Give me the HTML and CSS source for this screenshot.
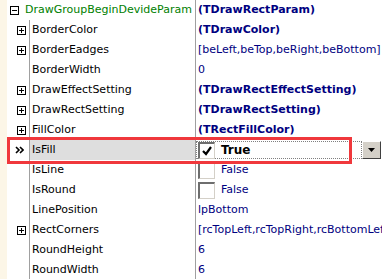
FILE: index.html
```html
<!DOCTYPE html>
<html lang="en">
<head>
    <meta charset="UTF-8">
    <title>Object Inspector</title>
    <link rel="stylesheet" href="styles.css">
</head>
<body>
    <div class="inspector">
        <div class="row group">
            <div class="gutter"></div>
            <div class="group-name">
                <svg class="box" width="9" height="9" viewBox="0 0 9 9"><rect x="0.5" y="0.5" width="8" height="8" fill="#fff" stroke="#000"/><path d="M2 4.5h5" stroke="#000"/></svg>
                <span class="green">DrawGroupBeginDevideParam</span>
            </div>
            <div class="value bold">(TDrawRectParam)</div>
        </div>
        <div class="row">
            <div class="gutter"></div>
            <div class="tree"><svg class="box" width="9" height="9" viewBox="0 0 9 9"><rect x="0.5" y="0.5" width="8" height="8" fill="#fff" stroke="#000"/><path d="M2 4.5h5M4.5 2v5" stroke="#000"/></svg></div>
            <div class="name">BorderColor</div>
            <div class="value bold">(TDrawColor)</div>
        </div>
        <div class="row">
            <div class="gutter"></div>
            <div class="tree"><svg class="box" width="9" height="9" viewBox="0 0 9 9"><rect x="0.5" y="0.5" width="8" height="8" fill="#fff" stroke="#000"/><path d="M2 4.5h5M4.5 2v5" stroke="#000"/></svg></div>
            <div class="name">BorderEadges</div>
            <div class="value">[beLeft,beTop,beRight,beBottom]</div>
        </div>
        <div class="row">
            <div class="gutter"></div>
            <div class="tree"></div>
            <div class="name">BorderWidth</div>
            <div class="value">0</div>
        </div>
        <div class="row">
            <div class="gutter"></div>
            <div class="tree"><svg class="box" width="9" height="9" viewBox="0 0 9 9"><rect x="0.5" y="0.5" width="8" height="8" fill="#fff" stroke="#000"/><path d="M2 4.5h5M4.5 2v5" stroke="#000"/></svg></div>
            <div class="name">DrawEffectSetting</div>
            <div class="value bold">(TDrawRectEffectSetting)</div>
        </div>
        <div class="row">
            <div class="gutter"></div>
            <div class="tree"><svg class="box" width="9" height="9" viewBox="0 0 9 9"><rect x="0.5" y="0.5" width="8" height="8" fill="#fff" stroke="#000"/><path d="M2 4.5h5M4.5 2v5" stroke="#000"/></svg></div>
            <div class="name">DrawRectSetting</div>
            <div class="value bold">(TDrawRectSetting)</div>
        </div>
        <div class="row">
            <div class="gutter"></div>
            <div class="tree"><svg class="box" width="9" height="9" viewBox="0 0 9 9"><rect x="0.5" y="0.5" width="8" height="8" fill="#fff" stroke="#000"/><path d="M2 4.5h5M4.5 2v5" stroke="#000"/></svg></div>
            <div class="name">FillColor</div>
            <div class="value bold">(TRectFillColor)</div>
        </div>
        <div class="row selected">
            <div class="gutter"></div>
            <div class="tree"><svg class="arrow" width="9" height="8" viewBox="0 0 9 8"><path d="M1 1l3 3-3 3M5 1l3 3-3 3" fill="none" stroke="#000" stroke-width="1.6"/></svg></div>
            <div class="name">IsFill</div>
            <div class="value editor">
                <div class="edit-box">
                    <span class="check on"><svg width="12" height="12" viewBox="0 0 12 12"><path d="M2 6l3 3 5-7" fill="none" stroke="#000" stroke-width="2.2"/></svg></span>
                    <span class="true">True</span>
                </div>
                <div class="drop"><svg width="7" height="4" viewBox="0 0 7 4"><path d="M0 0h7L3.5 4z" fill="#000"/></svg></div>
            </div>
        </div>
        <div class="row">
            <div class="gutter"></div>
            <div class="tree"></div>
            <div class="name">IsLine</div>
            <div class="value"><span class="check"></span>False</div>
        </div>
        <div class="row">
            <div class="gutter"></div>
            <div class="tree"></div>
            <div class="name">IsRound</div>
            <div class="value"><span class="check"></span>False</div>
        </div>
        <div class="row">
            <div class="gutter"></div>
            <div class="tree"></div>
            <div class="name">LinePosition</div>
            <div class="value">lpBottom</div>
        </div>
        <div class="row">
            <div class="gutter"></div>
            <div class="tree"><svg class="box" width="9" height="9" viewBox="0 0 9 9"><rect x="0.5" y="0.5" width="8" height="8" fill="#fff" stroke="#000"/><path d="M2 4.5h5M4.5 2v5" stroke="#000"/></svg></div>
            <div class="name">RectCorners</div>
            <div class="value">[rcTopLeft,rcTopRight,rcBottomLeft,rcBottomRight]</div>
        </div>
        <div class="row">
            <div class="gutter"></div>
            <div class="tree"></div>
            <div class="name">RoundHeight</div>
            <div class="value">6</div>
        </div>
        <div class="row">
            <div class="gutter"></div>
            <div class="tree"></div>
            <div class="name">RoundWidth</div>
            <div class="value">6</div>
        </div>
        <div class="mark"></div>
    </div>
</body>
</html>
```

FILE: styles.css
```css
body {
    margin: 0;
    background-color: #ffffff;
    font-family: "DejaVu Sans", Tahoma, sans-serif;
    font-size: 11px;
    color: #000000;
    overflow: hidden;
}
.inspector {
    position: relative;
    width: 382px;
    height: 279px;
    overflow: hidden;
}
.row {
    display: grid;
    grid-template-columns: 7px 22px 166px 1fr;
    height: 20px;
    line-height: 20px;
    white-space: nowrap;
}
.gutter {
    background-color: #fcf6e7;
}
.tree {
    display: flex;
    align-items: center;
    padding-left: 10px;
}
.box {
    display: block;
}
.group-name {
    grid-column: 2 / 4;
    display: flex;
    align-items: center;
    gap: 6px;
    padding-left: 3px;
}
.green {
    color: #008000;
}
.name {
    border-left: 1px solid #a0a0a0;
    padding-left: 2px;
    overflow: hidden;
}
.value {
    border-left: 1px solid #a0a0a0;
    padding-left: 2px;
    color: #000080;
    overflow: hidden;
    display: flex;
    align-items: center;
}
.bold {
    font-weight: bold;
}
.selected .name {
    background-color: #dedede;
}
.arrow {
    display: block;
    margin-left: -2px;
}
.check {
    display: inline-block;
    width: 14px;
    height: 14px;
    margin-right: 6px;
    border-top: 2px solid #6e6e6e;
    border-left: 2px solid #6e6e6e;
    border-right: 1px solid #d4d0c8;
    border-bottom: 1px solid #d4d0c8;
    background-color: #ffffff;
}
.check.on {
    display: flex;
    align-items: center;
    justify-content: center;
}
.editor {
    padding-left: 0;
    gap: 0;
}
.edit-box {
    flex: 1;
    height: 16px;
    display: flex;
    align-items: center;
    padding-left: 1px;
    border: 1px dotted #808080;
}
.true {
    color: #000000;
    font-weight: bold;
    font-size: 12px;
}
.drop {
    width: 17px;
    height: 16px;
    margin-right: 1px;
    display: flex;
    align-items: center;
    justify-content: center;
    background-color: #d4d0c8;
    border-top: 1px solid #ffffff;
    border-left: 1px solid #ffffff;
    border-right: 1px solid #404040;
    border-bottom: 1px solid #404040;
}
.mark {
    position: absolute;
    left: 7px;
    top: 137px;
    width: 339px;
    height: 21px;
    border: 3px solid #f0383c;
}
```
